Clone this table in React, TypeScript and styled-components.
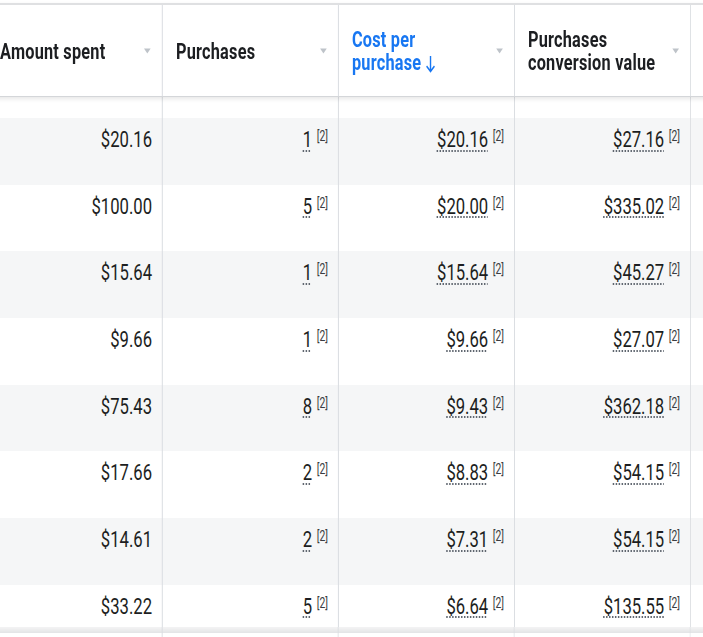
import React from 'react';
import styled, { createGlobalStyle } from 'styled-components';

const S = 0.74;
const u = (real: number) => `${(real / S).toFixed(3)}px`;

const Global = createGlobalStyle`
  html, body { margin: 0; padding: 0; background: #fff; overflow: hidden; }
  body { font-family: Roboto, "Liberation Sans", Arial, sans-serif; color: #1c1e21; }
`;

const Viewport = styled.div`
  width: 703px;
  height: 637px;
  overflow: hidden;
  background: #fff;
`;

const Stage = styled.div`
  width: ${u(720)};
  transform: scaleX(${S});
  transform-origin: 0 0;
`;

const Table = styled.div`
  margin-left: ${u(-13)};
  padding-top: 3px;
  display: flex;
  flex-direction: column;
`;

const Row = styled.div`
  display: grid;
  grid-template-columns: repeat(5, ${u(176)});
`;

const HeaderRow = styled(Row)`
  position: relative;
  z-index: 2;
  height: 94px;
  box-sizing: border-box;
  border-top: 2px solid #dfe0e2;
  border-bottom: 1px solid #d4d6d9;
  background: #fff;
  box-shadow: 0 2px 5px rgba(0, 0, 0, 0.1);
`;

const HeaderCell = styled.div`
  display: flex;
  align-items: center;
  justify-content: space-between;
  padding: 0 ${u(11)} 0 ${u(13)};
  box-shadow: inset -${u(1)} 0 0 #dadde1;
`;

const HeaderLabel = styled.div<{ $active?: boolean }>`
  font-size: 22px;
  font-weight: 700;
  letter-spacing: 0.3px;
  line-height: 23px;
  color: ${(p) => (p.$active ? '#1877f2' : '#1c1e21')};
  margin-top: 1px;
  white-space: nowrap;
`;

const SortArrow = styled.svg`
  display: inline-block;
  vertical-align: -3px;
  margin-left: ${u(3)};
`;

const Caret = styled.svg`
  flex: none;
`;

const Body = styled.div`
  height: 530px;
  overflow: hidden;
  display: flex;
  flex-direction: column;
`;

const DataRow = styled(Row)<{ $alt?: boolean; $h: number }>`
  flex: none;
  height: ${(p) => p.$h}px;
  background: ${(p) => (p.$alt ? '#f5f6f7' : '#fff')};
`;

const DataCell = styled.div`
  text-align: right;
  padding: 8px ${u(11)} 0 0;
  font-size: 22.5px;
  line-height: 26px;
  white-space: nowrap;
  box-shadow: inset -${u(1)} 0 0 #dadde1;
`;

const Value = styled.span<{ $dotted?: boolean }>`
  ${(p) =>
    p.$dotted
      ? `text-decoration: underline dotted #606770;
         text-decoration-thickness: 1.5px;
         text-underline-offset: 2.5px;`
      : ''}
`;

const Ref = styled.span`
  font-size: 14px;
  line-height: 12px;
  vertical-align: 6px;
  margin-left: 6px;
  color: #3a3d42;
`;

const FooterShadow = styled(Row)`
  height: 6px;
  background: linear-gradient(to bottom, #f4f4f5, #e3e4e6);
`;

const FooterRow = styled(Row)`
  height: 20px;
  background: #fff;
`;

const LineCell = styled.div`
  box-shadow: inset -${u(1)} 0 0 #dadde1;
`;

type Col = { label: React.ReactNode; active?: boolean };

const columns: Col[] = [
  { label: 'Amount spent' },
  { label: 'Purchases' },
  {
    label: (
      <>
        Cost per
        <br />
        purchase
        <SortArrow width={u(13)} height="18" viewBox="0 0 13 18">
          <path d="M6.5 1 V16.5 M1.2 11.2 L6.5 16.5 L11.8 11.2" fill="none" stroke="#1877f2" strokeWidth="1.9" />
        </SortArrow>
      </>
    ),
    active: true,
  },
  {
    label: (
      <>
        Purchases
        <br />
        conversion value
      </>
    ),
  },
];

const rows: [string, string, string, string][] = [
  ['$20.16', '1', '$20.16', '$27.16'],
  ['$100.00', '5', '$20.00', '$335.02'],
  ['$15.64', '1', '$15.64', '$45.27'],
  ['$9.66', '1', '$9.66', '$27.07'],
  ['$75.43', '8', '$9.43', '$362.18'],
  ['$17.66', '2', '$8.83', '$54.15'],
  ['$14.61', '2', '$7.31', '$54.15'],
  ['$33.22', '5', '$6.64', '$135.55'],
];

const CaretIcon = () => (
  <Caret width={u(9)} height="6" viewBox="0 0 9 6">
    <path d="M0 0.5 H9 L4.5 5.5 Z" fill="#bec3c9" />
  </Caret>
);

const Cell = ({ value, dotted }: { value: string; dotted?: boolean }) => (
  <DataCell>
    <Value $dotted={dotted}>{value}</Value>
    {dotted && <Ref>[2]</Ref>}
  </DataCell>
);

export default function App() {
  return (
    <>
      <Global />
      <Viewport>
        <Stage>
          <Table>
            <HeaderRow>
              {columns.map((c, i) => (
                <HeaderCell key={i}>
                  <HeaderLabel $active={c.active}>{c.label}</HeaderLabel>
                  <CaretIcon />
                </HeaderCell>
              ))}
              <LineCell />
            </HeaderRow>
            <Body>
              <DataRow $h={21}>
                <LineCell />
                <LineCell />
                <LineCell />
                <LineCell />
                <LineCell />
              </DataRow>
              {rows.map((r, i) => (
                <DataRow key={i} $alt={i % 2 === 0} $h={66.7}>
                  <Cell value={r[0]} />
                  <Cell value={r[1]} dotted />
                  <Cell value={r[2]} dotted />
                  <Cell value={r[3]} dotted />
                  <LineCell />
                </DataRow>
              ))}
            </Body>
            <FooterShadow>
              <LineCell />
              <LineCell />
              <LineCell />
              <LineCell />
              <LineCell />
            </FooterShadow>
            <FooterRow>
              <LineCell />
              <LineCell />
              <LineCell />
              <LineCell />
              <LineCell />
            </FooterRow>
          </Table>
        </Stage>
      </Viewport>
    </>
  );
}
